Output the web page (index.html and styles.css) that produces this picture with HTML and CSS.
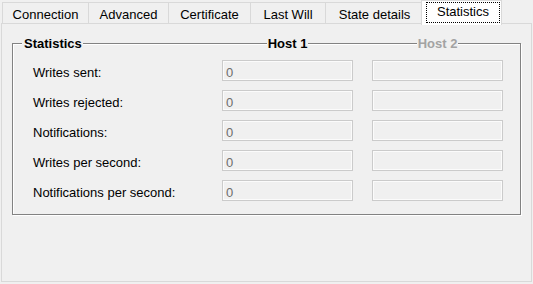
FILE: index.html
```html
<!DOCTYPE html>
<html>
<head>
<meta charset="utf-8">
<link rel="stylesheet" href="styles.css">
</head>
<body>
<div class="window">
  <div class="tabs">
    <div class="tab t1">Connection</div>
    <div class="tab t2">Advanced</div>
    <div class="tab t3">Certificate</div>
    <div class="tab t4">Last Will</div>
    <div class="tab t5">State details</div>
    <div class="tab active"><span class="focus">Statistics</span></div>
  </div>
  <div class="panel">
    <div class="group">
      <div class="group-head">
        <span class="title">Statistics</span>
        <span class="host">Host 1</span>
        <span class="host disabled">Host 2</span>
      </div>
      <div class="rows">
        <span class="label">Writes sent:</span>
        <div class="field">0</div>
        <div class="field"></div>
        <span class="label">Writes rejected:</span>
        <div class="field">0</div>
        <div class="field"></div>
        <span class="label">Notifications:</span>
        <div class="field">0</div>
        <div class="field"></div>
        <span class="label">Writes per second:</span>
        <div class="field">0</div>
        <div class="field"></div>
        <span class="label">Notifications per second:</span>
        <div class="field">0</div>
        <div class="field"></div>
      </div>
    </div>
  </div>
</div>
</body>
</html>
```

FILE: styles.css
```css
html, body {
  margin: 0;
  padding: 0;
  background: #f0f0f0;
}
body {
  font-family: "Liberation Sans", Arial, sans-serif;
  font-size: 13px;
  line-height: 15px;
  color: #000;
}
.window {
  width: 533px;
  height: 284px;
  box-sizing: border-box;
  padding: 0 1px;
  display: flex;
  flex-direction: column;
}
.tabs {
  display: flex;
  align-items: flex-end;
  height: 23px;
  padding-left: 1px;
  position: relative;
  z-index: 2;
}
.tab {
  box-sizing: border-box;
  height: 21px;
  border: 1px solid #d9d9d9;
  border-bottom: none;
  background: #f0f0f0;
  text-align: center;
  line-height: 19px;
  padding-top: 2px;
  margin-left: -1px;
  white-space: nowrap;
}
.tab.t1 { width: 87px; margin-left: 0; }
.tab.t2 { width: 81px; }
.tab.t3 { width: 83px; }
.tab.t4 { width: 76px; }
.tab.t5 { width: 99px; }
.tab.active {
  width: 81px;
  height: 25px;
  margin-left: -3px;
  margin-bottom: -2px;
  background: #fff;
  padding: 1px 0 0 4px;
  text-align: left;
  position: relative;
  z-index: 3;
}
.focus {
  display: block;
  box-sizing: border-box;
  width: 74px;
  height: 21px;
  outline: 1px dotted #000;
  outline-offset: -1px;
  line-height: 19px;
  text-align: center;
}
.panel {
  box-sizing: border-box;
  height: 259px;
  border: 1px solid #d9d9d9;
  background: #f0f0f0;
  padding: 19px 10px 0 10px;
}
.group {
  border: 1px solid #828282;
  box-shadow: inset 1px 1px 0 #fff, 1px 1px 0 #fff;
  padding: 0 17px 13px 20px;
}
.group-head {
  display: grid;
  grid-template-columns: 170px 131px 131px;
  column-gap: 19px;
  margin-top: -8px;
  font-weight: bold;
}
.title {
  justify-self: start;
  margin-left: -11px;
  padding: 0 1px 0 2px;
  background: #f0f0f0;
}
.host {
  justify-self: center;
  padding: 0 1px;
  background: #f0f0f0;
}
.host.disabled {
  color: #a3a3a3;
}
.rows {
  display: grid;
  grid-template-columns: 170px 131px 131px;
  grid-auto-rows: 21px;
  column-gap: 19px;
  row-gap: 9px;
  margin-top: 9px;
}
.label {
  padding-top: 5px;
  white-space: nowrap;
}
.field {
  box-sizing: border-box;
  border: 1px solid #cbcbcb;
  box-shadow: inset 1px 1px 0 #fbfbfb, inset -1px -1px 0 #fbfbfb;
  background: #f0f0f0;
  color: #6d6d6d;
  padding: 4px 0 0 3px;
  line-height: 15px;
}
```
